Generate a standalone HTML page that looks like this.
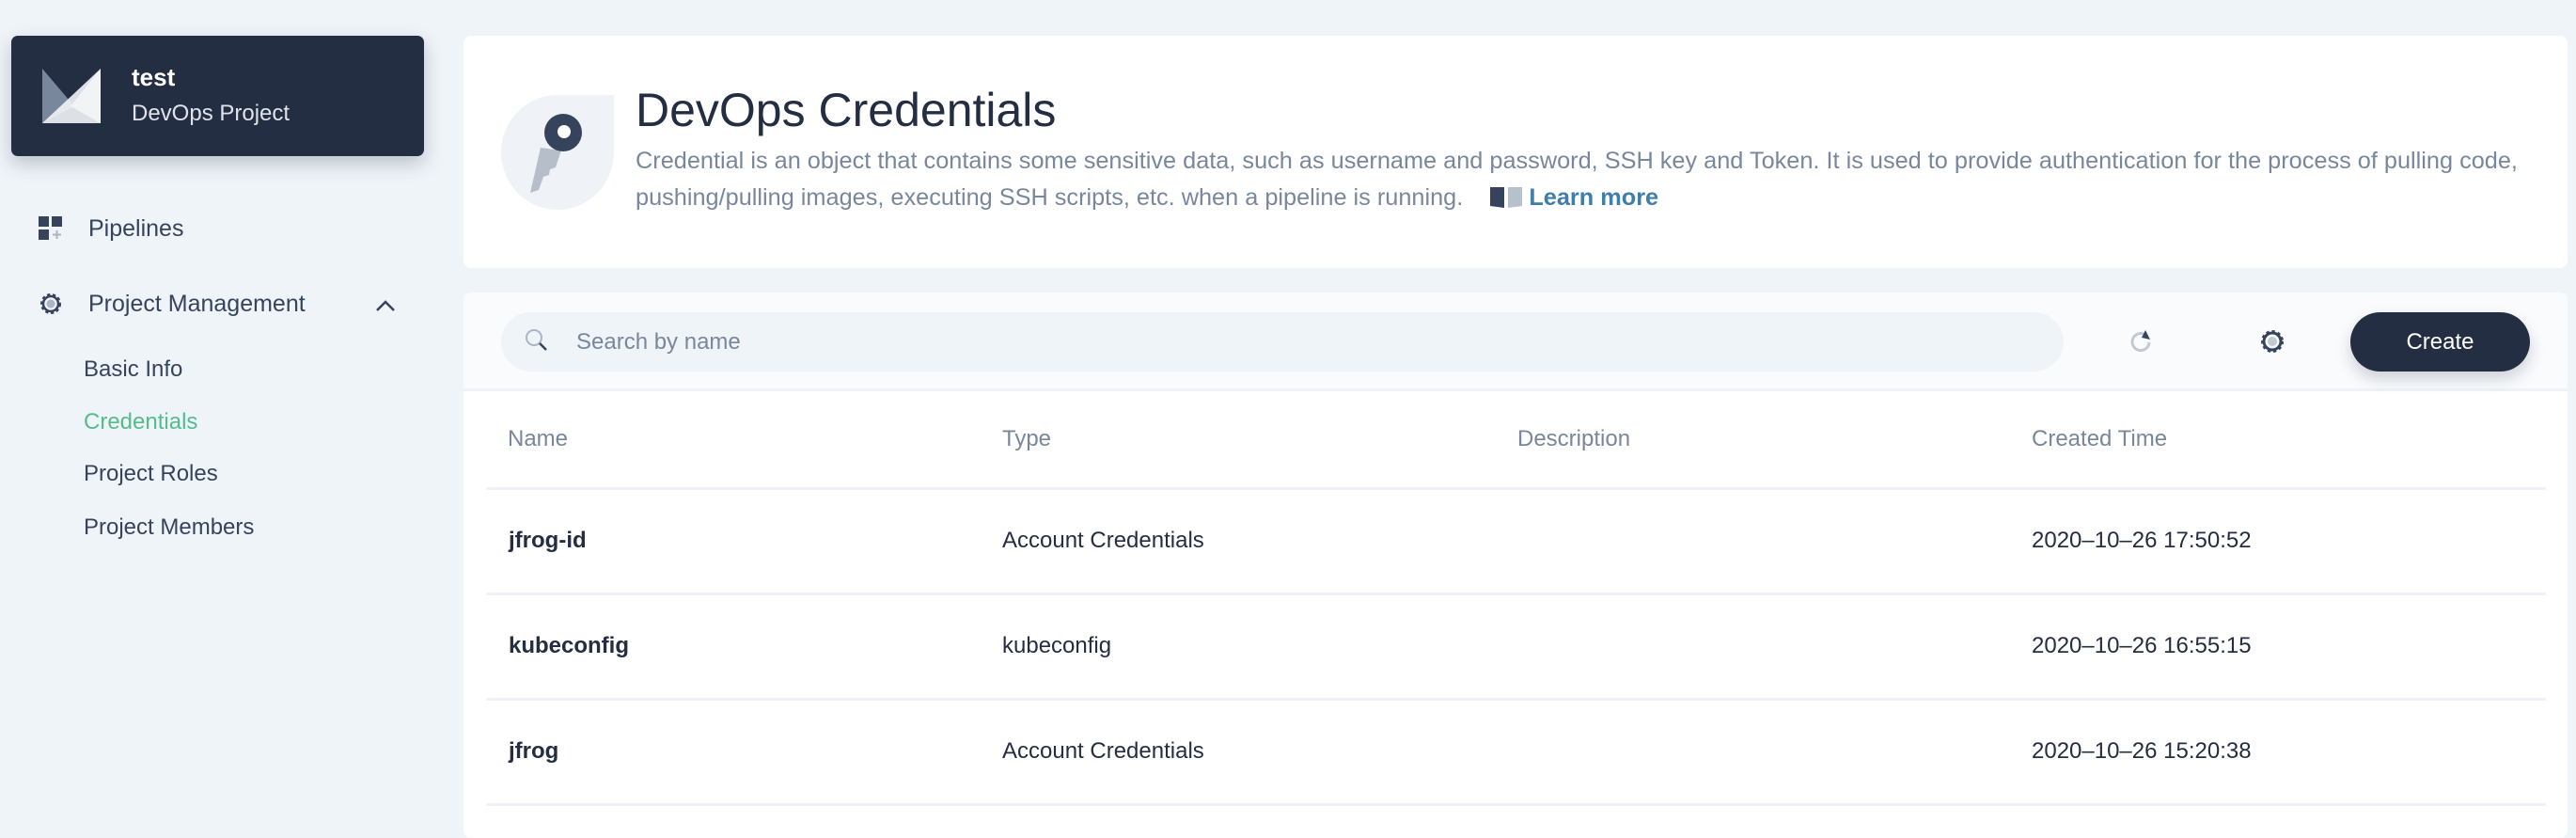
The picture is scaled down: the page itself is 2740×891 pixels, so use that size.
<!DOCTYPE html>
<html><head><style>
*{margin:0;padding:0;box-sizing:border-box}
body{width:2740px;height:868px;overflow:hidden;background:#eff4f9;font-family:"Liberation Sans",sans-serif;color:#242e42;position:relative}
.abs{position:absolute}
.side-card{left:12px;top:38px;width:439px;height:128px;background:#242e42;border-radius:7px;box-shadow:0 8px 20px rgba(36,46,66,.25)}
.nav{font-size:25px;color:#36435c}
.sub{left:89px;font-size:24px;color:#36435c}
.card{background:#fff;border-radius:8px}
.th{font-size:24px;color:#79879c;top:453px}
.td{font-size:24px;color:#242e42}
.line{left:517px;width:2191px;height:3px;background:#eff3f7}
</style></head><body>
<div class="abs side-card">
  <svg class="abs" style="left:33px;top:35px" width="62" height="58" viewBox="0 0 62 58"><polygon points="0,0 62,0 62,58 0,58" fill="#242e42"/><polygon points="0,0 34,40 0,58" fill="#79879c"/><polygon points="62,0 62,58 30,40" fill="#e3e6ea"/><polygon points="0,58 62,58 62,0" fill="#f2f4f6" opacity=".9"/></svg>
  <div class="abs" style="left:128px;top:29px;font-size:26px;font-weight:bold;color:#fff">test</div>
  <div class="abs" style="left:128px;top:69px;font-size:24px;color:#e0e4ea">DevOps Project</div>
</div>
<svg class="abs" style="left:41px;top:230px" width="26" height="26" viewBox="0 0 26 26"><rect x="0" y="0" width="11" height="11" fill="#36435c"/><rect x="14" y="0" width="11" height="11" fill="#36435c"/><rect x="0" y="14" width="11" height="11" fill="#36435c"/><path d="M19.5 15v9M15 19.5h9" stroke="#abb5c4" stroke-width="2"/></svg>
<div class="abs nav" style="left:94px;top:229px">Pipelines</div>
<svg class="abs" style="left:40px;top:309px" width="28" height="28" viewBox="0 0 28 28"><circle cx="14" cy="14" r="9" fill="none" stroke="#36435c" stroke-width="4" stroke-dasharray="3 2.5"/><circle cx="14" cy="14" r="8" fill="none" stroke="#36435c" stroke-width="2.5"/><circle cx="14" cy="14" r="4.5" fill="#abb5c4"/></svg>
<div class="abs nav" style="left:94px;top:309px">Project Management</div>
<svg class="abs" style="left:399px;top:318px" width="22" height="14" viewBox="0 0 22 14"><path d="M2 12L11 3l9 9" fill="none" stroke="#36435c" stroke-width="2.5"/></svg>
<div class="abs sub" style="top:379px">Basic Info</div>
<div class="abs sub" style="top:435px;color:#55bc8a">Credentials</div>
<div class="abs sub" style="top:490px">Project Roles</div>
<div class="abs sub" style="top:547px">Project Members</div>

<div class="abs card" style="left:493px;top:38px;width:2238px;height:247px"></div>
<svg class="abs" style="left:533px;top:101px" width="120" height="122" viewBox="0 0 120 122"><path d="M60 0h60v61a60 61 0 1 1-60-61z" fill="#eff2f6"/><path d="M42 56l-11 48 9-3 5-14 6-2 1-6 6-2 6-18z" fill="#b6bfc9"/><circle cx="66" cy="40" r="20" fill="#36435c"/><circle cx="67" cy="39" r="7" fill="#fff"/></svg>
<div class="abs" style="left:676px;top:88px;font-size:50px;color:#242e42">DevOps Credentials</div>
<div class="abs" style="left:676px;top:152px;width:2045px;font-size:25.3px;line-height:39px;color:#79879c">Credential is an object that contains some sensitive data, such as username and password, SSH key and Token. It is used to provide authentication for the process of pulling code, pushing/pulling images, executing SSH scripts, etc. when a pipeline is running. <span style="display:inline-block;width:22px"></span><svg width="34" height="24" viewBox="0 0 34 24" style="vertical-align:-3px"><path d="M0 2l15 0 0 22-15-2z" fill="#36435c"/><path d="M19 2l15 0 0 20-15 2z" fill="#b6c1cc"/></svg> <b style="color:#3e7ea8">Learn more</b></div>

<div class="abs card" style="left:493px;top:311px;width:2238px;height:580px"></div>
<div class="abs" style="left:493px;top:311px;width:2238px;height:105px;background:#f9fbfd;border-radius:8px 8px 0 0;border-bottom:3px solid #eff3f7"></div>
<div class="abs" style="left:533px;top:332px;width:1662px;height:63px;background:#eff4f9;border-radius:32px"></div>
<svg class="abs" style="left:557px;top:348px" width="28" height="28" viewBox="0 0 28 28"><circle cx="11" cy="11" r="8" fill="none" stroke="#abb5c4" stroke-width="2"/><path d="M17 17l7 7" stroke="#36435c" stroke-width="2.5"/></svg>
<div class="abs" style="left:613px;top:350px;font-size:24px;color:#79879c">Search by name</div>
<svg class="abs" style="left:2264px;top:349px" width="28" height="28" viewBox="0 0 28 28"><path d="M22 15a9 9 0 1 1-5-8.5" fill="none" stroke="#c1c9d1" stroke-width="3"/><polygon points="18,2 23,12 14,10" fill="#36435c"/></svg>
<svg class="abs" style="left:2403px;top:349px" width="28" height="28" viewBox="0 0 28 28"><circle cx="14" cy="14" r="10" fill="none" stroke="#36435c" stroke-width="4" stroke-dasharray="3 2.8"/><circle cx="14" cy="14" r="9" fill="none" stroke="#36435c" stroke-width="3"/><circle cx="14" cy="14" r="5" fill="#c1c9d1"/></svg>
<div class="abs" style="left:2500px;top:332px;width:191px;height:63px;background:#242e42;border-radius:32px;color:#fff;font-size:24px;text-align:center;line-height:63px;box-shadow:0 8px 16px rgba(36,46,66,.2)">Create</div>

<div class="abs th" style="left:540px">Name</div>
<div class="abs th" style="left:1066px">Type</div>
<div class="abs th" style="left:1614px">Description</div>
<div class="abs th" style="left:2161px">Created Time</div>
<div class="abs line" style="top:518px"></div>
<div class="abs td" style="left:541px;top:561px;font-weight:bold">jfrog-id</div>
<div class="abs td" style="left:1066px;top:561px">Account Credentials</div>
<div class="abs td" style="left:2161px;top:561px">2020–10–26 17:50:52</div>
<div class="abs line" style="top:630px"></div>
<div class="abs td" style="left:541px;top:673px;font-weight:bold">kubeconfig</div>
<div class="abs td" style="left:1066px;top:673px">kubeconfig</div>
<div class="abs td" style="left:2161px;top:673px">2020–10–26 16:55:15</div>
<div class="abs line" style="top:742px"></div>
<div class="abs td" style="left:541px;top:785px;font-weight:bold">jfrog</div>
<div class="abs td" style="left:1066px;top:785px">Account Credentials</div>
<div class="abs td" style="left:2161px;top:785px">2020–10–26 15:20:38</div>
<div class="abs line" style="top:854px"></div>
</body></html>
